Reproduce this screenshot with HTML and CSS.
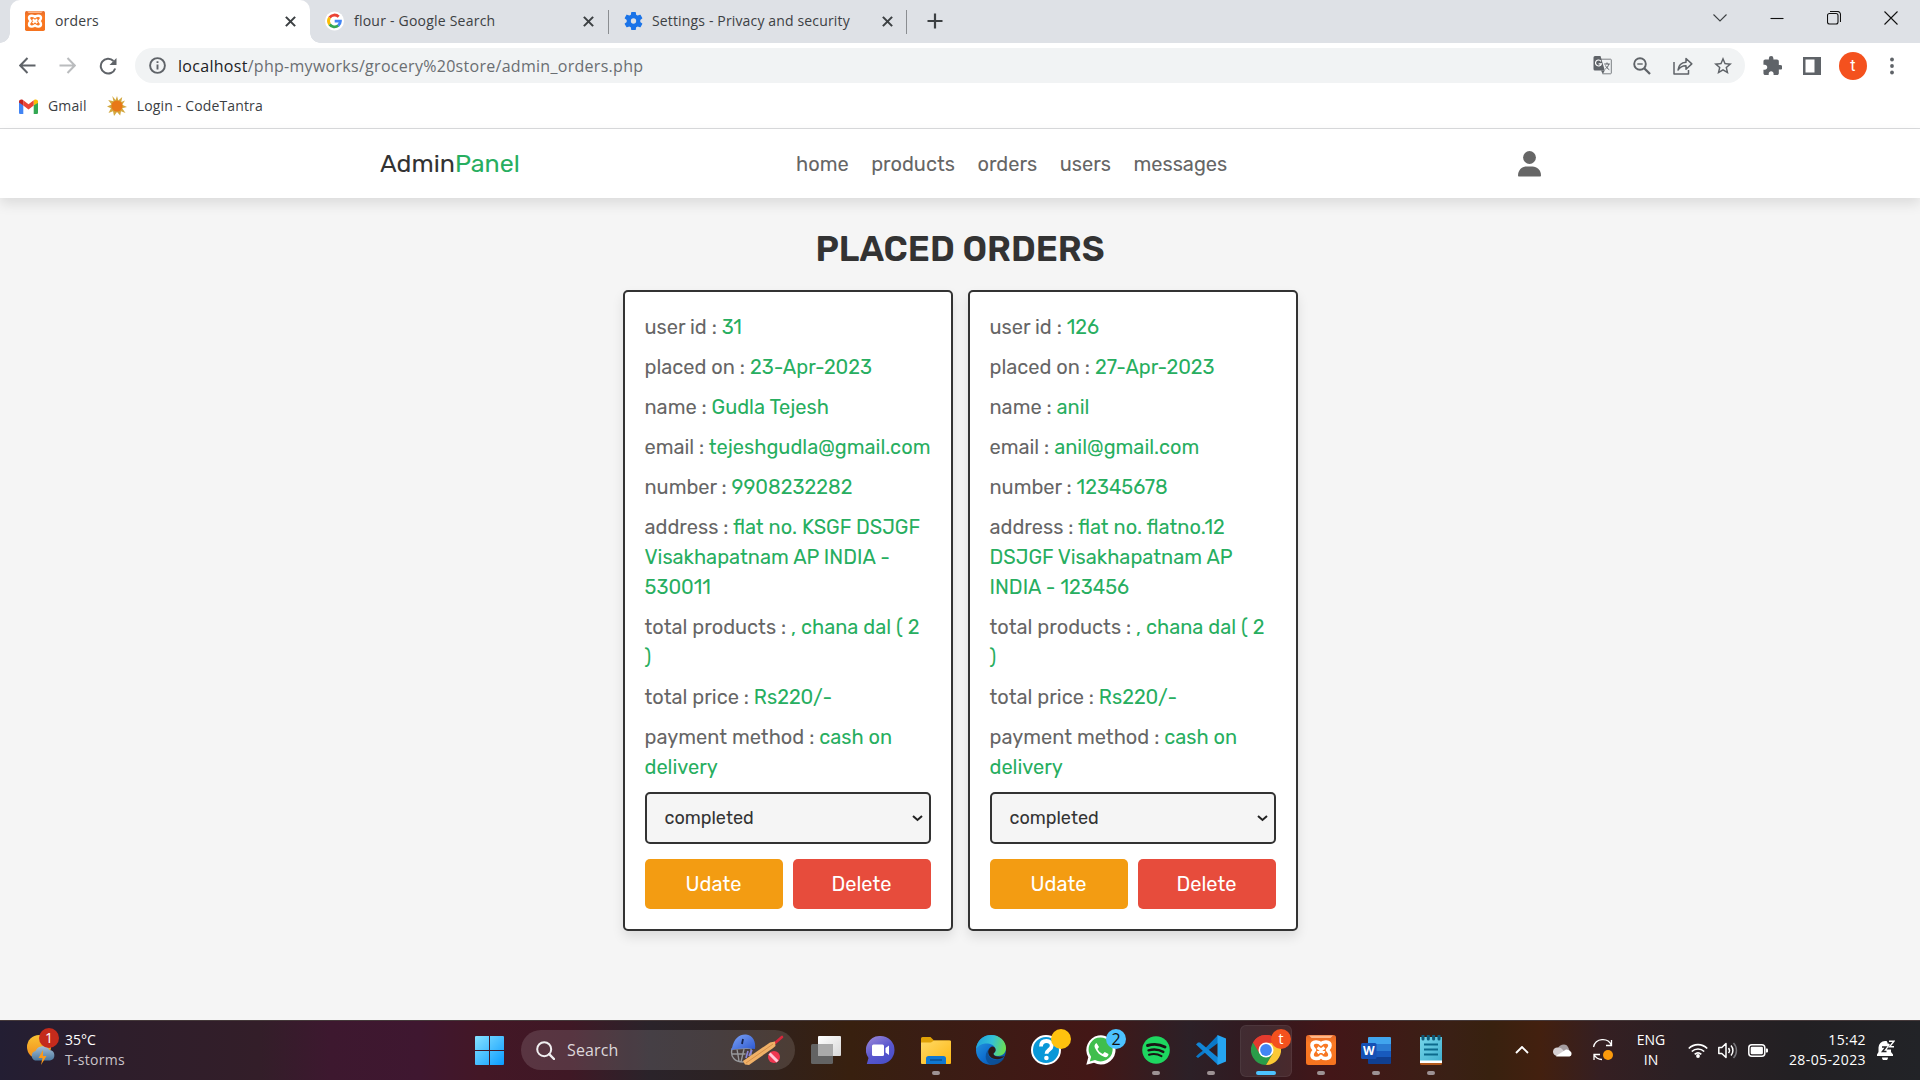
FILE: index.html
```html
<!DOCTYPE html>
<html lang="en">
<head>
<meta charset="utf-8">
<title>orders</title>
<link rel="stylesheet" href="styles.css">
</head>
<body>
<svg class="defs" width="0" height="0" aria-hidden="true">
  <defs>
    <linearGradient id="gWin" x1="0" y1="0" x2="1" y2="1"><stop offset="0" stop-color="#86e2ff"/><stop offset="1" stop-color="#0a9bff"/></linearGradient>
    <linearGradient id="gChat" x1="0" y1="0" x2="0.6" y2="1"><stop offset="0" stop-color="#a08bd8"/><stop offset="0.6" stop-color="#5a57cf"/><stop offset="1" stop-color="#4a50c8"/></linearGradient>
    <linearGradient id="gFolder" x1="0" y1="0" x2="1" y2="1"><stop offset="0" stop-color="#ffd966"/><stop offset="1" stop-color="#fdb813"/></linearGradient>
    <linearGradient id="gEdgeTop" x1="0" y1="0.4" x2="1" y2="0.6"><stop offset="0" stop-color="#1fa3dd"/><stop offset="0.5" stop-color="#34c1d6"/><stop offset="1" stop-color="#6ee04b"/></linearGradient>
    <linearGradient id="gEdgeBot" x1="0" y1="0" x2="1" y2="1"><stop offset="0" stop-color="#2a9de0"/><stop offset="0.5" stop-color="#0f6fd0"/><stop offset="1" stop-color="#0b4a94"/></linearGradient>
    <linearGradient id="gWhite" x1="0" y1="0" x2="1" y2="1"><stop offset="0" stop-color="#fff"/><stop offset="1" stop-color="#d8d8d8"/></linearGradient>
    <linearGradient id="gSun" x1="0" y1="0" x2="0" y2="1"><stop offset="0" stop-color="#f9c232"/><stop offset="1" stop-color="#f08a1d"/></linearGradient>
    <linearGradient id="gCloud" x1="0" y1="0" x2="0" y2="1"><stop offset="0" stop-color="#a5bfd6"/><stop offset="1" stop-color="#4b789f"/></linearGradient>
    <linearGradient id="gNote" x1="0" y1="0" x2="1" y2="1"><stop offset="0" stop-color="#76d6ea"/><stop offset="1" stop-color="#41b0cf"/></linearGradient>
    <linearGradient id="gXampp" x1="0" y1="0" x2="0" y2="1"><stop offset="0" stop-color="#e2672a"/><stop offset="0.25" stop-color="#fb7a24"/><stop offset="1" stop-color="#f5731f"/></linearGradient>
    <linearGradient id="gHelmet" x1="0" y1="0" x2="1" y2="1"><stop offset="0" stop-color="#7ea4f6"/><stop offset="1" stop-color="#2c58d0"/></linearGradient>
    <symbol id="xampp" viewBox="0 0 30 30">
      <rect width="30" height="30" rx="2.5" fill="url(#gXampp)"/>
      <path d="M3 .5h24l-2.500 2.500h-19z" fill="#ffb788"/>
      <g fill="none" stroke="#fff" stroke-width="3.600" stroke-linejoin="round">
        <path d="M15 9C13 6.300 6 6 6 10.500 6 13 8 14 8.500 15 8 16 6 17 6 20c0 4.500 7 4.200 9 1.500 2 2.700 9 3 9-1.500 0-3-2-4-2.500-5 .5-1 2.500-2 2.500-4.500C24 6 17 6.300 15 9z"/>
        <path d="M11.500 12.500l3.500 2.500 3.500-2.500M11.500 18l3.500-3 3.500 3" stroke-width="3"/>
      </g>
    </symbol>
    <symbol id="x" viewBox="0 0 10 10"><path d="M.8.8l8.400 8.400M9.200.8L.8 9.200" stroke="#3c4043" stroke-width="1.900" fill="none"/></symbol>
  </defs>
</svg>

<div class="browser">
  <div class="tabstrip">
    <div class="tab tab-active">
      <svg class="fav" width="20" height="20"><use href="#xampp"/></svg>
      <span class="tab-title">orders</span>
      <svg class="close" width="11" height="11"><use href="#x"/></svg>
    </div>
    <div class="tab">
      <svg class="fav" width="20" height="20" viewBox="0 0 20 20"><circle cx="10" cy="10" r="10" fill="#fff"/><g fill="none" stroke-width="3"><path d="M4.850 6.400A6.200 6.200 0 0 1 14.400 5.600" stroke="#ea4335"/><path d="M4.900 13.500A6.200 6.200 0 0 1 4.900 6.400" stroke="#fbbc05"/><path d="M14 14.700A6.200 6.200 0 0 1 4.900 13.500" stroke="#34a853"/><path d="M10.200 10.200h6a6.200 6.200 0 0 1-2.300 4.600" stroke="#4285f4"/></g></svg>
      <span class="tab-title">flour - Google Search</span>
      <svg class="close" width="11" height="11"><use href="#x"/></svg>
    </div>
    <div class="tab tab-settings">
      <svg class="fav" width="20" height="20" viewBox="2 2 20 20"><path fill="#1a73e8" d="M19.140 12.940c.04-.3.06-.61.06-.94s-.02-.64-.07-.94l2.030-1.580a.5.5 0 0 0 .12-.61l-1.920-3.320a.49.49 0 0 0-.59-.22l-2.390.96a7 7 0 0 0-1.620-.94l-.36-2.540a.48.48 0 0 0-.48-.41h-3.840a.47.47 0 0 0-.47.41l-.36 2.540c-.59.24-1.130.57-1.620.94l-2.390-.96a.48.48 0 0 0-.59.22L2.740 8.870a.47.47 0 0 0 .12.61l2.030 1.580c-.05.3-.09.63-.09.94s.02.64.07.94l-2.030 1.580a.5.5 0 0 0-.12.61l1.920 3.320c.12.22.37.29.59.22l2.390-.96c.5.38 1.030.7 1.620.94l.36 2.540c.05.24.24.41.48.41h3.840c.24 0 .44-.17.47-.41l.36-2.540c.59-.24 1.130-.56 1.620-.94l2.390.96c.22.08.47 0 .59-.22l1.920-3.320a.48.48 0 0 0-.12-.61zM12 14.800a2.800 2.800 0 1 1 0-5.600 2.800 2.800 0 0 1 0 5.600z"/></svg>
      <span class="tab-title">Settings - Privacy and security</span>
      <svg class="close" width="11" height="11"><use href="#x"/></svg>
    </div>
    <svg class="newtab" width="16" height="16" viewBox="0 0 16 16"><path d="M8 .5v15M.5 8h15" stroke="#3c4043" stroke-width="2.200"/></svg>
    <div class="winbtns">
      <svg width="14" height="14" viewBox="0 0 14 14"><path d="M.5 3.500L7 10l6.500-6.500"/></svg>
      <svg width="14" height="14" viewBox="0 0 14 14"><path d="M.5 7.500h13" class="dark"/></svg>
      <svg width="14" height="14" viewBox="0 0 14 14"><path d="M2.500 2.500h6.500a2 2 0 0 1 2 2V11a2 2 0 0 1-2 2H2.500a2 2 0 0 1-2-2V4.500a2 2 0 0 1 2-2zM3 .5h7.500a3 3 0 0 1 3 3V11" class="dark"/></svg>
      <svg width="14" height="14" viewBox="0 0 14 14"><path d="M.5.5l13 13M13.500.5l-13 13" class="dark"/></svg>
    </div>
  </div>

  <div class="toolbar">
    <svg width="17" height="17" viewBox="0 0 17 17"><path d="M16.500 8.500H1.500M8.500 1L1.200 8.500l7.300 7.500" fill="none" stroke="#5f6368" stroke-width="2"/></svg>
    <svg width="17" height="17" viewBox="0 0 17 17"><path d="M.5 8.500h15M8.500 1l7.300 7.500L8.500 16" fill="none" stroke="#babcbe" stroke-width="2"/></svg>
    <svg width="18" height="18" viewBox="0 0 18 18"><path d="M16.200 11.500A7.400 7.400 0 1 1 14.500 4" fill="none" stroke="#5f6368" stroke-width="2"/><path d="M17.500 1v7h-7z" fill="#5f6368"/></svg>
    <div class="omnibox">
      <svg width="17" height="17" viewBox="0 0 17 17"><circle cx="8.500" cy="8.500" r="7.400" fill="none" stroke="#5f6368" stroke-width="1.900"/><path d="M8.500 7.500v5M8.500 4.200v1.900" stroke="#5f6368" stroke-width="1.900"/></svg>
      <span class="url"><span class="host">localhost</span>/php-myworks/grocery%20store/admin_orders.php</span>
      <span class="omni-icons">
        <svg width="19" height="19" viewBox="0 0 19 19"><path d="M8 3.200h9.500a.8.8 0 0 1 .8.800v13a.8.8 0 0 1-.8.800H9.500" fill="#f1f3f4" stroke="#7b7f83" stroke-width="1"/><path d="M2 0h5.500l4.300 14.500H2a1.500 1.500 0 0 1-1.500-1.500V1.500A1.500 1.500 0 0 1 2 0z" fill="#5f6368"/><path d="M8 14.500h3.800L9.800 18z" fill="#5f6368"/><path d="M8 5.300A3 3 0 1 0 8.400 7.800H5.600" fill="none" stroke="#fff" stroke-width="1.200"/><path d="M11.200 8h5.600M14 6.500V8M15.800 8c-.5 2.500-2 4-3.500 5M12.500 9.500c.8 1.800 2 3 3.800 4.200" fill="none" stroke="#5f6368" stroke-width="1"/></svg>
        <svg width="18" height="18" viewBox="0 0 18 18"><circle cx="7" cy="7" r="5.800" fill="none" stroke="#5f6368" stroke-width="1.900"/><path d="M4.300 7h5.400" stroke="#5f6368" stroke-width="1.400"/><path d="M11.200 11.200l5.800 5.800" stroke="#5f6368" stroke-width="2.300"/></svg>
        <svg width="20" height="18" viewBox="0 0 20 18"><path d="M1 5v12h14.500v-4M5 13c.5-4.500 3.500-7.500 8-7.800V1.500l5.800 5.400-5.800 5.300V8.800C9.500 8.700 7 10 5 13z" fill="none" stroke="#5f6368" stroke-width="1.500" stroke-linejoin="round"/></svg>
        <svg width="18" height="18" viewBox="2 2 20 20"><path fill="#5f6368" d="M22 9.240l-7.190-.62L12 2 9.190 8.630 2 9.240l5.460 4.730L5.820 21 12 17.270 18.180 21l-1.630-7.030L22 9.240zM12 15.400l-3.760 2.270 1-4.280-3.320-2.880 4.380-.38L12 6.100l1.710 4.040 4.380.38-3.320 2.880 1 4.280L12 15.400z"/></svg>
      </span>
    </div>
    <div class="ext-icons">
      <svg width="19" height="19" viewBox="1.500 1 21 21"><path fill="#5f6368" d="M20.500 11H19V7c0-1.100-.9-2-2-2h-4V3.500a2.500 2.500 0 0 0-5 0V5H4c-1.100 0-2 .9-2 2v3.800h1.500c1.500 0 2.700 1.200 2.700 2.700S5 16.200 3.500 16.200H2V20c0 1.100.9 2 2 2h3.800v-1.500c0-1.500 1.200-2.700 2.700-2.700s2.700 1.200 2.700 2.700V22H17c1.100 0 2-.9 2-2v-4h1.500a2.500 2.500 0 0 0 0-5z"/></svg>
      <svg width="18" height="18" viewBox="0 0 18 18"><path fill="#5f6368" fill-rule="evenodd" d="M0 0h18v18H0zM2.500 2.500v13h9v-13z"/></svg>
      <span class="avatar">t</span>
      <svg width="4" height="18" viewBox="0 0 4 18" fill="#5f6368"><circle cx="2" cy="2.500" r="1.900"/><circle cx="2" cy="9" r="1.900"/><circle cx="2" cy="15.500" r="1.900"/></svg>
    </div>
  </div>

  <div class="bookmarks">
    <svg width="19" height="15" viewBox="0 0 19 15"><path d="M0 2v11.500A1.300 1.300 0 0 0 1.300 15H4.300V6z" fill="#4285f4"/><path d="M19 2v11.500a1.300 1.300 0 0 1-1.300 1.500H14.700V6z" fill="#34a853"/><path d="M14.700 6.300V1.500l1-.9C17 0 19 .6 19 2.500V4z" fill="#fbbc04"/><path d="M4.300 1.300L9.500 5.200l5.200-3.900v5.200L9.500 10.400 4.300 6.500z" fill="#ea4335"/><path d="M0 2.500C0 .6 2 0 3.300.6l1 .8v5.100L0 3.500z" fill="#c5221f"/></svg>
    <span class="bm">Gmail</span>
    <svg class="bm-sun" width="20" height="20" viewBox="0 0 20 20"><path d="M10 0l1.300 4.500 3.900-3.500-.9 5L18 4.500l-2.800 4.300L20 11l-4.800 1.200L18.500 17l-4.500-1.800-.8 4.300L10 16l-3 4-1-4.700L1.500 17l2.500-4.700L0 10.500l4.500-2L1.200 4l5.300 1.300L5.300 0 8.600 4z" fill="#d3a840"/><circle cx="10" cy="10" r="5.600" fill="#e87817"/></svg>
    <span class="bm">Login - CodeTantra</span>
  </div>
</div>

<header class="header">
  <a class="logo">Admin<span>Panel</span></a>
  <nav class="navbar"><a>home</a><a>products</a><a>orders</a><a>users</a><a>messages</a></nav>
  <svg class="user" width="23" height="26" viewBox="0 0 23 26" fill="#666"><circle cx="11.500" cy="6.500" r="6.400"/><path d="M0 24.500C0 19 4 15.500 8.500 15.500h6c4.500 0 8.500 3.500 8.500 9 0 .5-.4 1-1 1H1c-.6 0-1-.5-1-1z"/></svg>
</header>

<main class="orders">
  <h1 class="title">PLACED ORDERS</h1>
  <div class="boxes">
    <div class="box">
      <p>user id : <span>31</span></p>
      <p>placed on : <span>23-Apr-2023</span></p>
      <p>name : <span>Gudla Tejesh</span></p>
      <p>email : <span>tejeshgudla@gmail.com</span></p>
      <p>number : <span>9908232282</span></p>
      <p>address : <span>flat no. KSGF DSJGF<br>Visakhapatnam AP INDIA -<br>530011</span></p>
      <p>total products : <span>, chana dal ( 2<br>)</span></p>
      <p>total price : <span>Rs220/-</span></p>
      <p>payment method : <span>cash on<br>delivery</span></p>
      <div class="select">completed<svg width="11" height="7" viewBox="0 0 11 7"><path d="M1 1l4.500 4L10 1" fill="none" stroke="#222" stroke-width="2"/></svg></div>
      <div class="buttons"><span class="btn update">Udate</span><span class="btn delete">Delete</span></div>
    </div>
    <div class="box">
      <p>user id : <span>126</span></p>
      <p>placed on : <span>27-Apr-2023</span></p>
      <p>name : <span>anil</span></p>
      <p>email : <span>anil@gmail.com</span></p>
      <p>number : <span>12345678</span></p>
      <p>address : <span>flat no. flatno.12<br>DSJGF Visakhapatnam AP<br>INDIA - 123456</span></p>
      <p>total products : <span>, chana dal ( 2<br>)</span></p>
      <p>total price : <span>Rs220/-</span></p>
      <p>payment method : <span>cash on<br>delivery</span></p>
      <div class="select">completed<svg width="11" height="7" viewBox="0 0 11 7"><path d="M1 1l4.500 4L10 1" fill="none" stroke="#222" stroke-width="2"/></svg></div>
      <div class="buttons"><span class="btn update">Udate</span><span class="btn delete">Delete</span></div>
    </div>
  </div>
</main>

<footer class="taskbar">
  <div class="weather">
    <div class="w-icon">
      <svg width="30" height="32" viewBox="0 0 30 32"><circle cx="12" cy="13" r="12" fill="url(#gSun)"/><path d="M8 26.500a5 5 0 0 1 .5-9.500 8 8 0 0 1 14-1 5.300 5.300 0 0 1 .5 10.500z" fill="url(#gCloud)"/><path d="M16 16l-4.500 8h4L14 31l5.500-9H16z" fill="#fb9a1b"/></svg>
      <span class="badge red">1</span>
    </div>
    <div class="w-text"><b>35°C</b><span>T-storms</span></div>
  </div>

  <div class="apps">
    <span class="slot"><svg width="29" height="29" viewBox="0 0 29 29"><path fill="url(#gWin)" d="M1 0h13v14H0V1a1 1 0 0 1 1-1zM15 0h13a1 1 0 0 1 1 1v13H15zM0 15h14v14H1a1 1 0 0 1-1-1zM15 15h14v13a1 1 0 0 1-1 1H15z"/></svg></span>
    <div class="search">
      <svg width="19" height="19" viewBox="0 0 19 19"><circle cx="8.200" cy="8.200" r="7" fill="none" stroke="#f0eef0" stroke-width="2"/><path d="M13.200 13.200l4.800 4.800" stroke="#f0eef0" stroke-width="2.400" stroke-linecap="round"/></svg>
      <span>Search</span>
      <svg class="cricket" width="54" height="32" viewBox="0 0 54 32"><path d="M2 15C0 23 5 28 13 28l8-4V14zM1.500 20h14M7 15l2 12M14 15l-3 13" fill="none" stroke="#97989b" stroke-width="1.400"/><path d="M2 14C4 4 10 0 16 .5 23 1 26 8 25 15l-6-.5C14 14 8 15 1 16z" fill="url(#gHelmet)"/><path d="M13 5l-1 5" stroke="#16234f" stroke-width="1.800"/><path d="M18 17l-2 7M22 16l-3 6" stroke="#8b84d6" stroke-width="1.700"/><path d="M45 9l7-6" stroke="#d8283c" stroke-width="2.600" stroke-linecap="round"/><path d="M13 27L40 8.500l5-1 .5 4.500-3 2.500L19 31l-4-.5z" fill="#f0b067"/><path d="M16 29L43 10" stroke="#d58f48" stroke-width="1"/><circle cx="44" cy="23" r="6" fill="#ef3650"/><path d="M39.500 19.500l8 8" stroke="#ffc9d8" stroke-width="3"/></svg>
    </div>
    <span class="slot"><svg width="30" height="28" viewBox="0 0 30 28"><rect y="8" width="22" height="20" rx="1.500" fill="#636363"/><rect x="7" width="23" height="20" rx="1" fill="url(#gWhite)"/><path d="M7 8h15v12H7z" fill="#aaa"/></svg></span>
    <span class="slot"><svg width="29" height="29" viewBox="0 0 29 29"><path d="M14.500 0a14 14 0 1 1 0 28H.8l1.700-6A14 14 0 0 1 14.500 0z" fill="url(#gChat)"/><rect x="6" y="8.500" width="12" height="11.500" rx="1.500" fill="#fff"/><path d="M19.500 12l3.500-2.500v9.500l-3.500-2.500z" fill="#fff"/></svg></span>
    <span class="slot run"><svg width="30" height="27" viewBox="0 0 30 27"><path d="M0 1.500A1.500 1.500 0 0 1 1.500 0h8L13 3.500h15A2 2 0 0 1 30 5.500V8H0z" fill="#e0a106"/><path d="M0 5.500h10l3-2h16a1 1 0 0 1 1 1V26a1 1 0 0 1-1 1H1a1 1 0 0 1-1-1z" fill="url(#gFolder)"/><path d="M5 27v-5.500A2.500 2.500 0 0 1 7.500 19h15a2.500 2.500 0 0 1 2.500 2.500V27z" fill="#0f78d2"/><path d="M9 23h12" stroke="#0a4f92" stroke-width="1.500"/></svg></span>
    <span class="slot"><svg width="30" height="30" viewBox="0 0 30 30"><circle cx="15" cy="15" r="15" fill="url(#gEdgeBot)"/><path d="M0 14C1 5.500 7.500 0 15 0c9 0 15 6.500 15 13 0 5-3.700 8-8 8-3.500 0-5-1.500-4.500-2.500C19 17 20 16 19.500 14 18.500 9.500 13 8 9 8.500 4.500 9 1.500 11.500 0 14z" fill="url(#gEdgeTop)"/><path d="M12 16c-1 5 3.500 9 9 9 3 0 5.500-1 7.500-2.300C26 27 21 30.300 15.500 30 9 28 7 18 14.500 12.500 12.800 13.500 12.200 14.800 12 16z" fill="#0c4c91" opacity=".8"/><path d="M17.500 18.500C19 17 20 16 19.500 14c-.5-2-2.500-3-4.500-2-3 1.500-4 6-1 9.500 2.500 2.500 7 3.500 11 2 1.500-.5 2.500-1.500 3.500-2.500-1.500.5-11 2-11-2.500z" fill="#2e1a18"/></svg></span>
    <span class="slot"><svg width="30" height="30" viewBox="0 0 30 30"><circle cx="15" cy="15" r="14" fill="#0998d8" stroke="#fff" stroke-width="2"/><path d="M10 11.500c0-4 2.500-5.500 5.500-5.500 3.200 0 5.200 2 5.200 4.700 0 4-5.200 4-5.200 8" fill="none" stroke="#fff" stroke-width="3.800"/><circle cx="15.400" cy="23" r="2.300" fill="#fff"/></svg><span class="badge yellow"></span></span>
    <span class="slot"><svg width="30" height="30" viewBox="0 0 30 30"><path d="M.3 29.800l2-7.500A14.600 14.600 0 1 1 8 27.800z" fill="#fff"/><path d="M3.800 26.500l1.300-4.800A12 12 0 1 1 9 25z" fill="#3fbe4d"/><path d="M10.500 8c-2 1-2.500 3-1.500 5 2 4.500 5 7.500 9.500 9 2 .5 4-.5 4-3l-3.800-2-1.900 2c-2.500-1-4.300-3-5.300-5l1.500-2z" fill="#fff"/></svg><span class="badge blue">2</span></span>
    <span class="slot run"><svg width="28" height="28" viewBox="0 0 28 28"><circle cx="14" cy="14" r="13.800" fill="#1ed760"/><g fill="none" stroke="#191414" stroke-linecap="round"><path d="M5.500 9.500c6-1.800 12.500-1.200 17.500 1.600" stroke-width="2.900"/><path d="M6.500 14.300c5-1.400 10.700-.8 14.800 1.600" stroke-width="2.400"/><path d="M7 18.700c4.300-1.100 8.800-.7 12.500 1.400" stroke-width="2"/></g></svg></span>
    <span class="slot run"><svg width="30" height="30" viewBox="0 0 30 30"><path d="M22 0L7 15.500 2.500 19 0 21.500 2 23l20-15z" fill="#0a78c8"/><path d="M2 7.500L0 9.500 22 30V22.500L4 7.500z" fill="#1286d6"/><path d="M21.500 0L30 3.500v23L21.500 30z" fill="#25a5f2"/></svg></span>
    <span class="slot run active"><svg width="30" height="30" viewBox="0 0 30 30"><path d="M15 15L2 7.500A15 15 0 0 1 28 7.500z" fill="#e33b2e"/><path d="M15 15L2 7.500A15 15 0 0 0 15 30l6.500-11z" fill="#2a9c49"/><path d="M15 7.500h13A15 15 0 0 1 15 30l6.500-11z" fill="#fcc934"/><path d="M15 0A15 15 0 0 0 2 7.500l6.500 11L15 7.800h13A15 15 0 0 0 15 0z" fill="#e33b2e"/><circle cx="15" cy="15" r="7.500" fill="#fff"/><circle cx="15" cy="15" r="5.900" fill="#4285f4"/></svg><span class="badge orange">t</span></span>
    <span class="slot run"><svg width="30" height="30"><use href="#xampp"/></svg></span>
    <span class="slot run"><svg width="30" height="27" viewBox="0 0 30 27"><path d="M7 1a1 1 0 0 1 1-1h21a1 1 0 0 1 1 1v6H7z" fill="#41a5ee"/><path d="M7 7h23v7H7z" fill="#2b7cd3"/><path d="M7 14h23v6H7z" fill="#185abd"/><path d="M7 20h23v6a1 1 0 0 1-1 1H8a1 1 0 0 1-1-1z" fill="#103f91"/><rect y="6" width="15.500" height="16" rx="1.500" fill="#1551b5"/><text x="7.800" y="18" text-anchor="middle" class="w">W</text></svg></span>
    <span class="slot run"><svg width="22" height="30" viewBox="0 0 22 30"><path d="M0 27h22v1.500A1.500 1.500 0 0 1 20.500 30h-19A1.500 1.500 0 0 1 0 28.500z" fill="#b45a1c"/><path d="M0 25h22v3H0z" fill="#fff"/><path d="M0 2h22v23.500H0z" fill="url(#gNote)"/><path d="M4 9.500h14M4 14.500h14M4 19.500h14" stroke="#0c6a8c" stroke-width="1.800"/><path d="M3 .5v3.500M8.300.5v3.500M13.600.5v3.500M19 .5v3.500" stroke="#0f5a78" stroke-width="3" stroke-linecap="round"/></svg></span>
  </div>

  <div class="tray">
    <svg class="t-up" width="14" height="8" viewBox="0 0 14 8"><path d="M1 7l6-6 6 6" fill="none" stroke="#fff" stroke-width="1.900"/></svg>
    <svg class="t-cloud" width="20" height="14" viewBox="0 0 20 14"><path d="M5 8a5.500 5.500 0 0 1 10.500-3L17 9 6 12z" fill="#a59da0"/><path d="M4 13a4 4 0 0 1 .5-8.500C7 4 9 5.500 10 7l4 6z" fill="#d5d0d2"/><path d="M3 13L13 6.500a4.500 4.500 0 0 1 4 1.500 3 3 0 0 1-.5 5.500h-13z" fill="#fff"/></svg>
    <svg class="t-sync" width="22" height="22" viewBox="0 0 22 22"><path d="M1.500 8A9.500 9.500 0 0 1 19.500 6.500M19.500 1v5.500H14M2 21v-5.500h6M2 15.500c1.500 3 4.500 5 8 5" fill="none" stroke="#fff" stroke-width="1.300"/><circle cx="16" cy="16" r="5" fill="#fb9a0c"/></svg>
    <div class="t-lang"><span>ENG</span><span>IN</span></div>
    <svg class="t-wifi" width="20" height="15" viewBox="0 0 20 15"><g fill="none" stroke="#fff" stroke-width="1.700"><path d="M.8 5.500a13 13 0 0 1 18.400 0"/><path d="M3.800 8.500a9 9 0 0 1 12.400 0"/><path d="M6.700 11.300a5 5 0 0 1 6.600 0"/></g><circle cx="10" cy="13" r="1.900" fill="#fff"/></svg>
    <svg class="t-sound" width="20" height="17" viewBox="0 0 20 17"><path d="M.8 5.500h3L8 1.500v14l-4.200-4h-3z" fill="none" stroke="#fff" stroke-width="1.500" stroke-linejoin="round"/><path d="M10.500 6a4 4 0 0 1 0 5M13 3.500a7.500 7.500 0 0 1 0 10" fill="none" stroke="#fff" stroke-width="1.500"/><path d="M15.500 1a11 11 0 0 1 0 15" fill="none" stroke="#77757a" stroke-width="1.500"/></svg>
    <svg class="t-bat" width="20" height="13" viewBox="0 0 20 13"><rect x=".8" y=".8" width="16" height="11.400" rx="3" fill="none" stroke="#fff" stroke-width="1.500"/><rect x="2.700" y="2.700" width="12.200" height="7.600" rx="1.200" fill="#fff"/><path d="M18 4.500h1a1 1 0 0 1 1 1v2a1 1 0 0 1-1 1h-1z" fill="#fff"/></svg>
    <div class="t-clock"><span>15:42</span><span>28-05-2023</span></div>
    <svg class="t-bell" width="18" height="20" viewBox="0 0 18 20"><path d="M0 14.500L1.500 12V7.500A6.500 6.500 0 0 1 8 1h1.500l4.500 5v6l2 2.500v1.500H0zM5 17.500h6a3 3 0 0 1-6 0z" fill="#fff"/><path d="M5 7h4l-3.500 4.500H9.500" fill="none" stroke="#232326" stroke-width="1.500"/><path d="M10.500 2h6l-4 6h5" fill="none" stroke="#232326" stroke-width="3"/><path d="M12 1.200h5l-4.500 5.500h4.500" fill="none" stroke="#fff" stroke-width="1.400"/></svg>
  </div>
</footer>
</body>
</html>
```
FILE: styles.css
```css
* { box-sizing: border-box; margin: 0; padding: 0; }
body {
  width: 1920px; height: 1080px; overflow: hidden;
  display: flex; flex-direction: column;
  background: #f5f5f5;
  font-family: Rubik, Inter, sans-serif;
}
svg { display: block; flex: none; }
.defs { position: absolute; }

/* browser window */
.browser {
  flex: none; height: 129px; background: #fff;
  border-bottom: 1px solid #d9dadc;
  font-family: "Segoe UI", "Open Sans", sans-serif; font-size: 14px; letter-spacing: .15px; color: #3c4043;
}
.tabstrip { display: flex; height: 43px; background: #dee1e6; padding-left: 10px; }
.tab { display: flex; align-items: center; width: 299px; padding: 0 15px 1px 15px; }
.tab-active { width: 300px; padding-right: 14px; background: #fff; border-radius: 10px 10px 0 0; position: relative; }
.tab-active::before, .tab-active::after {
  content: ""; position: absolute; bottom: 0; width: 10px; height: 10px;
}
.tab-active::before { left: -10px; background: radial-gradient(circle at 0 0, #dee1e6 9.5px, #fff 10px); }
.tab-active::after { right: -10px; background: radial-gradient(circle at 100% 0, #dee1e6 9.5px, #fff 10px); }
.tab-title { flex: 1; padding: 0 0 2px 10px; white-space: nowrap; }
.tab:nth-child(2) { letter-spacing: .22px; background: linear-gradient(#8a8d91, #8a8d91) 100% 10px / 1px 24px no-repeat; }
.tab-settings { background: linear-gradient(#8a8d91, #8a8d91) 100% 10px / 1px 24px no-repeat; width: 298px; padding-right: 14px; }
.tab:nth-child(2) .fav, .tab-settings .fav { width: 19px; }
.tab-settings .tab-title { padding-left: 9px; }
.newtab { margin: 13px 0 0 20px; }
.winbtns { display: flex; gap: 43px; margin: 11px 22px 0 auto; }
.winbtns path { fill: none; stroke: #3c4043; stroke-width: 1.1; }
.winbtns .dark { stroke: #111; }

.toolbar { display: flex; align-items: center; height: 45px; padding-left: 19px; }
.toolbar > svg { margin-right: 23px; }
.toolbar > svg:nth-child(3) { margin-right: 18px; }
.omnibox { display: flex; align-items: center; width: 1610px; height: 35px; border-radius: 18px; background: #f1f3f4; padding: 0 13px 0 14px; }
.url { font-size: 16px; letter-spacing: .29px; color: #6a6e72; padding-left: 12px; }
.host { color: #202124; }
.omni-icons { display: flex; align-items: center; gap: 21.5px; margin-left: auto; }
.ext-icons { display: flex; align-items: center; margin-left: 18px; }
.ext-icons > * + * { margin-left: 21px; }
.ext-icons .avatar { width: 28px; height: 28px; margin-left: 18px; border-radius: 50%; background: #f4511e; color: #fff; font: 16px/27px Roboto, sans-serif; text-align: center; }
.ext-icons > svg:last-child { margin-left: 23px; }
.bookmarks { display: flex; align-items: center; height: 36px; padding-left: 19px; }
.bm { padding: 0 0 2px 10px; }
.bm-sun { margin-left: 20px; }

/* page header */
.header {
  flex: none; display: grid; grid-template-columns: 416px 1fr auto; align-items: center;
  height: 69px; padding: 0 379px 0 380px; background: #fff; position: relative;
  box-shadow: 0 6px 12px rgba(0, 0, 0, .1);
}
.logo { font-size: 25px; color: #333; }
.logo span { color: #27ae60; }
.navbar { display: flex; gap: 22.500px; font-size: 20px; color: #666; }
.navbar a { display: block; }

/* orders */
.orders { flex: 1; padding-top: 26px; }
.title { height: 66px; line-height: 51px; text-align: center; font-size: 35px; font-weight: 600; color: #333; }
.boxes { display: flex; justify-content: center; gap: 15px; }
.box {
  width: 330px; height: 641px; padding: 20px;
  background: #fff; border: 2px solid #333; border-radius: 5px;
  box-shadow: 0 6px 12px rgba(0, 0, 0, .1);
}
.box p { font-size: 20px; line-height: 30px; padding-bottom: 10px; color: #666; white-space: nowrap; }
.box p span { color: #27ae60; }
.select {
  display: flex; align-items: center; justify-content: space-between;
  height: 52px; padding: 0 6px 0 18px;
  border: 2px solid #333; border-radius: 5px; background: #f5f5f5;
  font-size: 18px; color: #333;
}
.buttons { display: flex; gap: 10px; margin-top: 15px; }
.btn { flex: 1; height: 50px; line-height: 50px; border-radius: 5px; text-align: center; color: #fff; font-size: 20px; font-weight: 400; }
.update { background: #f39c12; }
.delete { background: #e74c3c; }

/* taskbar */
.taskbar {
  flex: none; display: flex; height: 60px; border-top: 1px solid #45393a;
  background: linear-gradient(90deg, #231e33 0, #2e1e2b 120px, #331e29 260px, #3d182f 330px, #3f1730 420px, #431726 480px, #3f1825 570px, #2a232a 650px, #2c2223 720px, #38200f 850px, #3a1d14 930px, #431716 1090px, #2c2027 1190px, #33191f 1260px, #431618 1330px, #3a2015 1450px, #38210f 1490px, #43200f 1540px, #351f22 1600px, #2b2024 1680px, #222023 1800px, #222327 1920px);
  font-family: "Segoe UI", "Open Sans", sans-serif; font-size: 14px; line-height: 20px; color: #fff;
}
.weather { display: flex; width: 462px; padding: 9px 0 0 27px; }
.w-icon { position: relative; width: 38px; padding-top: 4px; }
.w-text { display: flex; flex-direction: column; }
.w-text b { font-weight: 400; }
.w-text span { color: #cbc4c9; letter-spacing: .3px; }
.badge { position: absolute; width: 20px; height: 20px; border-radius: 50%; text-align: center; font-size: 14px; line-height: 20px; }
.w-icon .badge { left: 12px; top: -2px; }
.slot .badge { right: 2px; top: 8px; }
.red { background: #c42b1c; }
.yellow { background: #ffc20e; }
.blue { background: #4cc2ff; color: #111; font-size: 16px; }
.orange { background: #f4511e; }
.apps { display: flex; align-items: center; height: 58px; }
.slot { position: relative; display: flex; align-items: center; justify-content: center; width: 55px; height: 58px; }
.apps > .slot:first-child { width: 59px; padding-right: 4px; }
.run::after { content: ""; position: absolute; left: 50%; bottom: 4px; width: 8px; height: 4px; margin-left: -4px; border-radius: 2px; background: #9d9294; }
.active::before { content: ""; position: absolute; left: 2px; top: 4px; width: 50px; height: 50px; border-radius: 6px; border: 1px solid rgba(255,255,255,.06); background: rgba(255,255,255,.08); }
.active > svg { position: relative; }
.active::after { width: 20px; margin-left: -10px; background: #4cc2ff; }
.search { display: flex; align-items: center; width: 274px; height: 40px; margin-right: 3px; padding: 0 11px 0 15px; border-radius: 20px; background: rgba(255,255,255,.13); font-size: 16px; letter-spacing: .15px; color: #ddd8db; }
.search span { padding-left: 12px; }
.cricket { margin-left: auto; }
.w { font: 700 12px "Open Sans", sans-serif; fill: #fff; }
.tray { display: flex; align-items: center; flex: 1; height: 58px; padding-left: 57px; }
.t-cloud { margin-left: 24px; }
.t-sync { margin-left: 19px; }
.t-lang { display: flex; flex-direction: column; width: 52px; margin-left: 11px; text-align: center; }
.t-wifi { margin-left: 11px; }
.t-sound { margin-left: 10px; }
.t-bat { margin-left: 10px; }
.t-clock { display: flex; flex-direction: column; margin-left: auto; text-align: right; letter-spacing: .4px; }
.t-bell { margin: 0 25px 0 11px; }
```
